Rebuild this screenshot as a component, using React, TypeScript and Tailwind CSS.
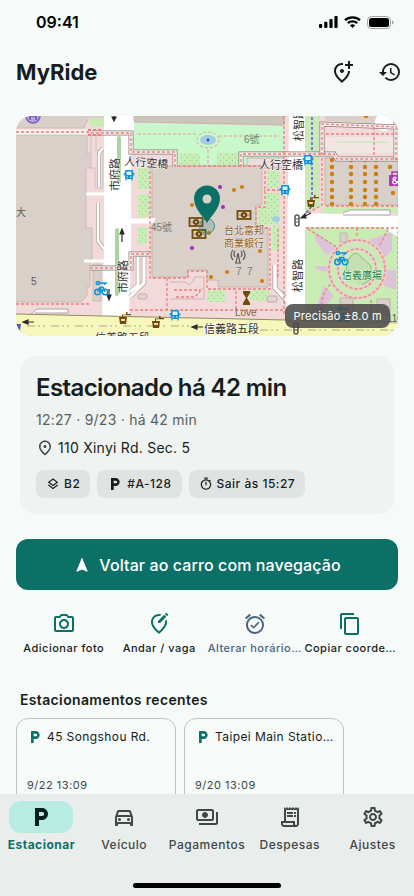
import type { ReactNode } from "react";
import type { IconType } from "react-icons";
import {
  MdAlarmOn,
  MdContentCopy,
  MdHistory,
  MdLocalParking,
  MdNavigation,
  MdOutlineAddLocationAlt,
  MdOutlineDirectionsCar,
  MdOutlineEditLocationAlt,
  MdOutlineLayers,
  MdOutlinePayments,
  MdOutlinePhotoCamera,
  MdOutlinePlace,
  MdOutlineReceiptLong,
  MdOutlineSettings,
  MdOutlineTimer,
} from "react-icons/md";

const actions: { label: string; icon: IconType; muted?: boolean }[] = [
  { label: "Adicionar foto", icon: MdOutlinePhotoCamera },
  { label: "Andar / vaga", icon: MdOutlineEditLocationAlt },
  { label: "Alterar horário…", icon: MdAlarmOn, muted: true },
  { label: "Copiar coorde…", icon: MdContentCopy },
];

const recents = [
  { place: "45 Songshou Rd.", date: "9/22 13:09" },
  { place: "Taipei Main Statio…", date: "9/20 13:09" },
];

const tabs: { label: string; icon: IconType }[] = [
  { label: "Estacionar", icon: MdLocalParking },
  { label: "Veículo", icon: MdOutlineDirectionsCar },
  { label: "Pagamentos", icon: MdOutlinePayments },
  { label: "Despesas", icon: MdOutlineReceiptLong },
  { label: "Ajustes", icon: MdOutlineSettings },
];

const StatusBar = () => (
  <div className="flex h-11 shrink-0 items-center justify-between pl-9 pr-5 text-black">
    <span className="text-base font-semibold">09:41</span>
    <div className="flex items-center gap-1.5">
      <svg viewBox="0 0 19 12" className="h-3 w-[19px]" fill="currentColor" aria-hidden="true">
        <rect x="0" y="8" width="3.2" height="4" rx="1" />
        <rect x="5.2" y="5.8" width="3.2" height="6.2" rx="1" />
        <rect x="10.4" y="3" width="3.2" height="9" rx="1" />
        <rect x="15.4" y="0" width="3.2" height="12" rx="1" />
      </svg>
      <svg viewBox="0 0 17 12" className="h-3 w-[17px]" fill="none" stroke="currentColor" strokeWidth="2.3" aria-hidden="true">
        <path d="M1 4.2C5.2 0.3 11.8 0.3 16 4.2" />
        <path d="M3.8 7.2C6.4 4.8 10.6 4.8 13.2 7.2" />
        <path d="M8.5 12 5.9 9.3Q8.5 7.3 11.1 9.3Z" fill="currentColor" stroke="none" />
      </svg>
      <svg viewBox="0 0 27 13" className="h-[13px] w-[27px]" aria-hidden="true">
        <rect x="0.5" y="0.5" width="23" height="12" rx="3.8" fill="none" stroke="#a0a3a3" />
        <rect x="2" y="2" width="20" height="9" rx="2.5" fill="#000" />
        <path d="M25 4.5c1 .3 1.5 1 1.5 2s-.5 1.7-1.5 2z" fill="#a0a3a3" />
      </svg>
    </div>
  </div>
);

const Bus = ({ x, y }: { x: number; y: number }) => (
  <g transform={`translate(${x} ${y})`}>
    <rect x="-4" y="-5" width="8" height="9" rx="1.2" fill="#0a92da" />
    <rect x="-2.5" y="-3.5" width="5" height="3.5" fill="#d9f0fb" />
    <path d="M-2.5 2h1.5M1 2h1.5" stroke="#fff" />
    <path d="M-3 4v1.5M3 4v1.5M-4.7-2v2.5M4.7-2v2.5" stroke="#0a92da" strokeWidth="1.2" />
  </g>
);

const Bike = ({ x, y }: { x: number; y: number }) => (
  <g transform={`translate(${x} ${y})`} fill="none" stroke="#0a92da" strokeWidth="1.5">
    <circle cx="-3.5" cy="4" r="2.7" />
    <circle cx="4" cy="4" r="2.7" />
    <path d="M-3.5 4-1-.5h3.5L4 4M-1-.5 1 4" />
    <circle cx="-3.2" cy="-5" r="1.6" />
    <path d="M-1.5-5H6M3.5-5v2" />
  </g>
);

const Fountain = ({ x, y }: { x: number; y: number }) => (
  <g transform={`translate(${x} ${y})`} fill="#734a08">
    <path d="M-4-1h8l-1 7h-6z" />
    <path d="M-1-3.500H3V-6h1.500v2H8v1.300H0V-1h-1z" />
    <path d="M-2 1h4l-.3 2h-3.400z" fill="#efe6c4" />
  </g>
);

const Bank = ({ x, y }: { x: number; y: number }) => (
  <g transform={`translate(${x} ${y})`} fill="none" stroke="#734a08">
    <rect x="-6.500" y="-4" width="13" height="8" strokeWidth="1.800" />
    <ellipse rx="3" ry="2.500" fill="#734a08" />
    <circle r="1" fill="#d9d0c9" stroke="none" />
    <path d="M-4.500 0h.8M3.700 0h.8" />
  </g>
);

// Footbridge: pale deck with a dark edge on both sides
const Bridge = ({ d }: { d: string }) => (
  <>
    <path d={d} fill="none" stroke="#858080" strokeWidth="5" />
    <path d={d} fill="none" stroke="#f8ecea" strokeWidth="3.600" />
  </>
);

const columnDots = [332, 351, 365, 376].flatMap((x) =>
  [160, 167, 174, 182, 190, 197, 204].map((y) => ({ x, y }))
);

const ParkingMap = () => (
  <svg
    viewBox="16 116 382 220"
    preserveAspectRatio="xMidYMid slice"
    className="h-full w-full font-['Liberation_Sans','Noto_Sans_CJK_TC',sans-serif]"
    role="img"
    aria-label="MyRide"
  >
    <defs>
      <pattern id="trees" width="6" height="6" patternUnits="userSpaceOnUse">
        <rect width="6" height="6" fill="#c9edb7" />
        <circle cx="1.500" cy="1.500" r="0.600" fill="#93c383" />
        <circle cx="4.500" cy="4.500" r="0.600" fill="#93c383" />
      </pattern>
    </defs>
    <rect x="16" y="116" width="382" height="220" fill="#f2d9da" />

    {/* West block */}
    <g fill="#d9d0c9" stroke="#c5b6ad" strokeWidth="0.8">
      <path d="M15 115H104V119H88L84 128H15Z" />
      <path d="M15 135H87V153H93V168H86V228H92V259H90V287H87V295L81 302H15Z" />
      <path d="M91 135H96V150H103V188H95V168H91Z" fill="#f2d9da" stroke="#d3bdbb" />
      <path d="M93 264H101V301H93Z" />
    </g>
    <path d="M88 118H104V127H91Z" fill="#c9ecb4" />
    <circle cx="33" cy="116" r="7" fill="#b7a4dc" stroke="#7663b9" strokeWidth="1.500" />
    <path d="M30 111v9M36 111v9M30 116h6" stroke="#6a55b0" strokeWidth="1.500" />
    <path d="M16 132H87" stroke="#faf5f3" strokeWidth="5" />
    <path d="M103 148 99 153V187M98 203V241L104 249" fill="none" stroke="#b1a6a2" strokeWidth="4" />
    <path d="M103 148 99 153V187M98 203V241L104 249" fill="none" stroke="#fff" strokeWidth="2.500" />
    <path d="M86 194H105M84 261H105" stroke="#fff" strokeWidth="3" />
    <path d="M31 314 37 309H68V313H35" fill="#fff" stroke="#b1a6a2" />

    {/* City hall road */}
    <path d="M104 116H134V132L131 136V250L129 317H102L104 250Z" fill="#fff" />
    <rect x="117" y="136" width="4" height="47" rx="2" fill="#aad5a1" />
    <rect x="115" y="228" width="4" height="68" rx="2" fill="#aad5a1" />

    {/* Garden north of the tower */}
    <path d="M134 116H284V125L134 122Z" fill="#ccc5ba" stroke="#bdb2a5" strokeWidth="0.800" />
    <path d="M134 123 284 126V167H178V151H134Z" fill="#c9f8cd" />
    <path d="M179 153H200V165H179ZM217 153H240V165H217Z" fill="url(#trees)" />
    <path d="M247 158H284V168H247Z" fill="#eadddb" stroke="#b8aaa7" strokeWidth="0.800" />
    <path d="M138 134H197M219 136H280M208 150V166" stroke="#ee9a92" strokeDasharray="3 2" />
    <ellipse cx="208" cy="140" rx="11" ry="8" fill="#c9f8cd" stroke="#ee9a92" strokeDasharray="3 2" />
    <ellipse cx="208" cy="140" rx="8" ry="5" fill="#a2cde3" />
    <circle cx="208" cy="140" r="1.500" fill="#2c52c5" />

    {/* Tower */}
    <path
      d="M152 166H262V205H256V228H268V287H218V280H207V270H188V277H152Z"
      fill="#d9d0c9"
      stroke="#c5b6ad"
    />
    <g fill="url(#trees)">
      <path d="M138 168H149V189H138ZM138 194H149V217H138ZM138 227H147V244H138Z" />
      <path d="M267 170H280V188H267ZM266 193H280V212H258V207H266ZM258 212H279V224H272V250H280V225H258Z" />
      <rect x="207" y="290" width="19" height="12" rx="3" />
      <rect x="250" y="290" width="20" height="11" rx="3" />
    </g>
    <ellipse cx="276" cy="219" rx="4" ry="3" fill="#a2cde3" />
    <path d="M130 221H150Q153 221 153 218" stroke="#fff" strokeWidth="5" fill="none" />
    <path d="M144 257V283L130 297M138 257V285L130 292" fill="none" stroke="#b5a9a6" strokeWidth="4.500" />
    <path d="M144 257V283L130 297M138 257V285L130 292" fill="none" stroke="#fff" strokeWidth="3" />
    <path d="M170 282H186Q190 289 195 277H204V299H170" fill="none" stroke="#c8aaa8" strokeWidth="0.800" />
    <rect x="138" y="294" width="9" height="5" rx="2" fill="#e4d4d0" stroke="#b4a19d" strokeWidth="0.800" />
    <rect x="267" y="296" width="10" height="6" rx="2" fill="#e4d4d0" stroke="#b4a19d" strokeWidth="0.800" />
    <path d="M275 265V288L292 306" fill="none" stroke="#a69a98" strokeWidth="5" />
    <path d="M275 265V288L292 306" fill="none" stroke="#fff" strokeWidth="3.500" />

    {/* Songzhi road */}
    <path d="M289 116H305V213L398 216V227H305V322H286Z" fill="#fff" />
    <path d="M305 116H320V204H326L305 214Z" fill="#c9e9ba" />
    <path d="M312 117V206L306 213M310 230V321" stroke="#5f5ad6" strokeWidth="1.500" strokeDasharray="3 2" fill="none" />

    {/* East block */}
    <path d="M325 116H398V124L325 121Z" fill="#d9d0c9" />
    <circle cx="384" cy="122" r="9" fill="#fff" />
    <path d="M326 137H394V153H326Z" fill="#f1e6e3" />
    <path d="M325 158H398V205H325Z" fill="#d9d0c9" stroke="#c5b6ad" />
    <path d="M326 207H398V213H320Z" fill="#c6eeb5" />
    <path d="M343 213 350 210H390V215H343" fill="#fff" stroke="#aaa2a0" />
    <path d="M337 142H389" stroke="#d4ecc5" strokeWidth="2" />
    <g fill="#cf7d0c">
      {columnDots.map((dot) => (
        <circle key={`${dot.x}-${dot.y}`} cx={dot.x} cy={dot.y} r="2.200" />
      ))}
      <circle cx="390" cy="167" r="2.200" />
      <circle cx="393" cy="193" r="2.200" />
      <circle cx="366" cy="116" r="2.200" />
    </g>
    <g transform="translate(395 180)">
      <path d="M-6-5H6V6H-6Z" fill="#a63cb0" />
      <path d="M-3-5V-8H3V-5" fill="none" stroke="#a63cb0" strokeWidth="1.500" />
      <path d="M3 3-2-1Q-1-4 1-2 0 0-2 1-3 4 0 4 2 3 3 1" fill="none" stroke="#fff" strokeWidth="1.200" />
    </g>

    {/* Xinyi square */}
    <path d="M305 227H398V322H305Z" fill="#c9ecb4" />
    <path d="M315 232 337 248 326 255 315 240ZM368 240 392 232V250L384 258ZM314 266H328V272L318 270ZM324 285 334 296 318 315H314ZM380 270H396V290L384 286Z" fill="#dcc3da" />
    <path d="M382 227H398V237Z" fill="#fff" />
    <ellipse cx="357" cy="269" rx="28" ry="29" fill="#c9ecb4" stroke="#e8d0cd" strokeWidth="4" />
    <ellipse cx="357" cy="269" rx="19" ry="20" fill="#c9ecb4" stroke="#e8d3ce" strokeWidth="4" />
    <path d="M346 280Q345 254 357 253L371 266V279L362 285" fill="#c4dfb2" stroke="#8da482" strokeWidth="0.800" />
    <path d="M340 298H353V312H340ZM377 299H390V314H377ZM340 233H347V242H340Z" fill="#d9d0c9" stroke="#b9aca5" strokeWidth="0.800" />

    <Bridge d="M92 133H131V152H175V166" />
    <Bridge d="M241 167V154H334L337 159H398" />
    <Bridge d="M322 155V124L396 127V160" />
    <Bridge d="M90 268H131V254H151" />

    {/* Footpaths */}
    <g fill="none" stroke="#ea8077" strokeWidth="1.300" strokeDasharray="3 2">
      <path d="M16 132H87L92 133H131V152H175V166H264" />
      <path d="M88 130H101M88 135H101" strokeWidth="2" />
      <path d="M150 166V278H188V271H207V289H270V228H256V207H265V170" />
      <path d="M16 304H91M90 268H131V254H151M130 310H284M167 278V310M174 290H201M176 297H195L203 288" />
      <path d="M280 190H264M284 116V315M278 229V278M241 167V154H334L337 159H398M236 291V310" />
      <path d="M322 155V124L396 127V160M326 134H395M374 127V155M322 158V205L306 214M326 206H398M306 228H398V321" />
      <ellipse cx="357" cy="269" rx="28" ry="29" />
      <ellipse cx="357" cy="269" rx="19" ry="20" />
      <path d="M308 229 337 247M380 245 388 229M357 228V238M321 310Q322 290 331 284M371 300V320" />
    </g>

    {/* Xinyi road */}
    <path d="M16 314 103 316 286 320 398 323V336H16Z" fill="#f6f7ba" />
    <path d="M16 314 103 316 286 320" stroke="#928963" fill="none" />
    <path d="M286 320 398 323" stroke="#c3bb87" fill="none" />
    <path d="M27 326H190M260 330H398" stroke="#a3a08d" strokeWidth="0.900" strokeDasharray="8 3 2 3 2 6" />
    <path d="M16 324 21 324 20 331 16 329Z" fill="#5261a5" />
    <g stroke="#2e2c2a" strokeWidth="1.200" fill="#2e2c2a">
      <path d="M24 322H34M28 320 23 322 28 324ZM193 327H203M197 325 192 327 197 329Z" />
      <path d="M122 242V230M120 234 122 229 124 234ZM109 289V299M107 295 109 300 111 295ZM114 116V119M112 117 114 121 116 117Z" />
      <path d="M311 213 303 217M305 214 301 218 306 218Z" />
    </g>

    <Bus x={129} y={175} />
    <Bus x={308} y={160} />
    <Bus x={285} y={190} />
    <Bus x={175} y={315} />
    <Bike x={101} y={288} />
    <Bike x={341} y={258} />
    <Bike x={343} y={314} />
    <Fountain x={123} y={318} />
    <Fountain x={156} y={322} />
    <Fountain x={311} y={201} />
    <Bank x={196} y={222} />
    <Bank x={199} y={234} />
    <Bank x={244} y={215} />
    <g fill="#cf7d0c">
      <circle cx="192" cy="205" r="2" />
      <circle cx="234" cy="190" r="2" />
      <circle cx="242" cy="187" r="2" />
      <circle cx="209" cy="233" r="2" />
      <circle cx="260" cy="251" r="2" />
      <circle cx="227" cy="272" r="2" />
      <circle cx="211" cy="277" r="2" />
      <circle cx="262" cy="281" r="2" />
    </g>
    <g fill="#a02bbd">
      <circle cx="220" cy="187" r="2" />
      <circle cx="223" cy="207" r="2" />
      <circle cx="192" cy="248" r="2" />
    </g>
    <g fill="none" stroke="#5d5752" strokeWidth="1.200">
      <path d="M236 263 238 253 240 263M235 263H241M235 257Q233 254 235 251M241 257Q243 254 241 251M233 260Q229 255 233 250M243 260Q247 255 243 250" />
      <rect x="295" y="215" width="4" height="11" rx="2" strokeWidth="1.500" />
      <rect x="294" y="323" width="4" height="11" rx="2" strokeWidth="1.500" />
      <path d="M295 219H299M295 222H299M294 327H298M294 330H298" />
    </g>
    <path d="M243 291H250V293L247 298 250 303V305H243V303L246 298 243 293Z" fill="#734a08" />

    {/* Labels */}
    <g fill="#343130" stroke="#ffffff" strokeOpacity="0.600" strokeWidth="1.500" paintOrder="stroke" fontSize="11">
      <text x="124" y="165" transform="rotate(4 124 165)">人行空橋</text>
      <text x="259" y="169">人行空橋</text>
      <text transform="translate(119 191) rotate(-90)">市府路</text>
      <text transform="translate(127 293) rotate(-90)">市府路</text>
      <text transform="translate(303 141) rotate(-90)">松智路</text>
      <text transform="translate(302 292) rotate(-90)">松智路</text>
      <text x="204" y="333">信義路五段</text>
      <text x="95" y="342">信義路五段</text>
    </g>
    <g fill="#5c5856" fontSize="10">
      <text x="16" y="216">大</text>
      <text x="31" y="285">5</text>
      <text x="151" y="231" fill="#777">45號</text>
      <text x="244" y="143" fill="#6f8a70">6號</text>
      <text x="236" y="275" fill="#777">7</text>
      <text x="247" y="275" fill="#777">7</text>
      <text x="235" y="316" fill="#85663f">Love</text>
      <text x="387" y="322">118</text>
    </g>
    <g fill="#8a5c23" stroke="#f1e8e1" strokeWidth="1" paintOrder="stroke" fontSize="10">
      <text x="224" y="234">台北富邦</text>
      <text x="224" y="247">商業銀行</text>
    </g>
    <text x="342" y="279" fontSize="10" fill="#178048" stroke="#e4f8db" strokeWidth="1" paintOrder="stroke">
      信義廣場
    </text>

    {/* Car position */}
    <circle cx="207" cy="226" r="7.500" fill="#0d7067" fillOpacity="0.200" stroke="#4c8c86" />
    <path
      d="M207 223C204 217 194 209 194 198.500A13 13 0 0 1 220 198.500C220 209 210 217 207 223Z"
      fill="#0d7067"
    />
    <circle cx="207" cy="199" r="4.500" fill="#d9d0c9" />
  </svg>
);

const Chip = ({ icon, children }: { icon: ReactNode; children: ReactNode }) => (
  <span className="flex h-7 items-center gap-1 rounded-lg bg-[#dfe3e2] px-2.5 text-xs font-medium tracking-[0.5px]">
    {icon}
    <span>{children}</span>
  </span>
);

const App = () => {
  return (
    <div className="flex h-screen flex-col overflow-hidden bg-[#f6faf9] font-['Inter',sans-serif] text-[#171d1c]">
      <StatusBar />

      <header className="flex h-14 shrink-0 items-center justify-between pl-4 pr-3">
        <h1 className="text-[22px] font-bold">MyRide</h1>
        <div className="flex gap-6">
          <button type="button" aria-label="Estacionar">
            <MdOutlineAddLocationAlt className="size-6" />
          </button>
          <button type="button" aria-label="Estacionamentos recentes">
            <MdHistory className="size-6" />
          </button>
        </div>
      </header>

      <main className="min-h-0 flex-1 overflow-y-auto px-4 pt-4 [scrollbar-width:none]">
        <section className="relative h-[220px] overflow-hidden rounded-2xl">
          <ParkingMap />
          <span className="absolute bottom-2 right-2 rounded-lg bg-[#484646]/85 px-2 py-1 text-[11px] leading-4 tracking-wide text-white">
            Precisão ±8.0 m
          </span>
        </section>

        {/* Current parking */}
        <section className="mx-1 mt-5 rounded-2xl bg-[#eff3f2] p-4">
          <h2 className="text-2xl font-semibold tracking-tight">Estacionado há 42 min</h2>
          <p className="mt-1.5 text-sm leading-5 tracking-[0.25px] text-[#5a605f]">12:27 · 9/23 · há 42 min</p>
          <p className="mt-2 flex items-center gap-1 text-sm leading-5 tracking-[0.25px]">
            <MdOutlinePlace className="size-[18px] text-[#3f4947]" />
            <span>110 Xinyi Rd. Sec. 5</span>
          </p>
          <div className="mt-3 flex flex-wrap gap-[7px]">
            <Chip icon={<MdOutlineLayers className="size-3.5" />}>B2</Chip>
            <Chip icon={<MdLocalParking className="size-4" />}>#A-128</Chip>
            <Chip icon={<MdOutlineTimer className="size-3.5" />}>Sair às 15:27</Chip>
          </div>
        </section>

        <button
          type="button"
          className="mt-[25px] flex h-[51px] w-full items-center justify-center gap-2 rounded-xl bg-[#0d7067] text-base font-medium tracking-[0.1px] text-white"
        >
          <MdNavigation className="size-[18px]" />
          Voltar ao carro com navegação
        </button>

        {/* Quick actions */}
        <div className="mt-[22px] grid grid-cols-4">
          {actions.map(({ label, icon: Icon, muted }) => (
            <button
              key={label}
              type="button"
              className={`flex flex-col items-center gap-1 whitespace-nowrap text-[11px] leading-4 font-medium tracking-[0.5px] ${
                muted ? "text-[#4a6380]" : "text-[#171d1c]"
              }`}
            >
              <Icon className={`size-6 ${muted ? "text-[#4a6380]" : "text-[#0d7067]"}`} />
              {label}
            </button>
          ))}
        </div>

        {/* Recent parkings */}
        <h2 className="mx-1 mt-[34px] text-sm font-semibold leading-5 tracking-wide">Estacionamentos recentes</h2>
        <div className="mt-2 flex gap-2 overflow-x-auto [scrollbar-width:none]">
          {recents.map(({ place, date }) => (
            <article
              key={place}
              className="flex h-24 w-40 shrink-0 flex-col justify-between rounded-xl border border-[#bec5c3] px-2.5 pt-2 pb-5"
            >
              <h3 className="flex items-center gap-1 whitespace-nowrap text-xs leading-5 tracking-[0.4px]">
                <MdLocalParking className="size-4 shrink-0 text-[#0d7067]" />
                {place}
              </h3>
              <p className="text-[11px] leading-4 tracking-[0.5px] text-[#3f4947]">{date}</p>
            </article>
          ))}
        </div>
      </main>

      <nav className="shrink-0 bg-[#e9edec] pt-[7px]">
        <div className="grid grid-cols-5">
          {tabs.map(({ label, icon: Icon }, i) => (
            <a
              key={label}
              href="#"
              className={`flex flex-col items-center gap-1 text-xs leading-4 tracking-[0.5px] ${
                i === 0 ? "font-bold text-[#0d7067]" : "font-medium text-[#3f4947]"
              }`}
            >
              <span
                className={`flex h-8 w-16 items-center justify-center rounded-xl ${
                  i === 0 ? "bg-[#b8ece3] text-[#00201d]" : ""
                }`}
              >
                <Icon className="size-6" />
              </span>
              {label}
            </a>
          ))}
        </div>
        <div className="mx-auto mt-[30px] mb-2 h-[5px] w-[148px] rounded-full bg-black" />
      </nav>
    </div>
  );
};

export default App;
